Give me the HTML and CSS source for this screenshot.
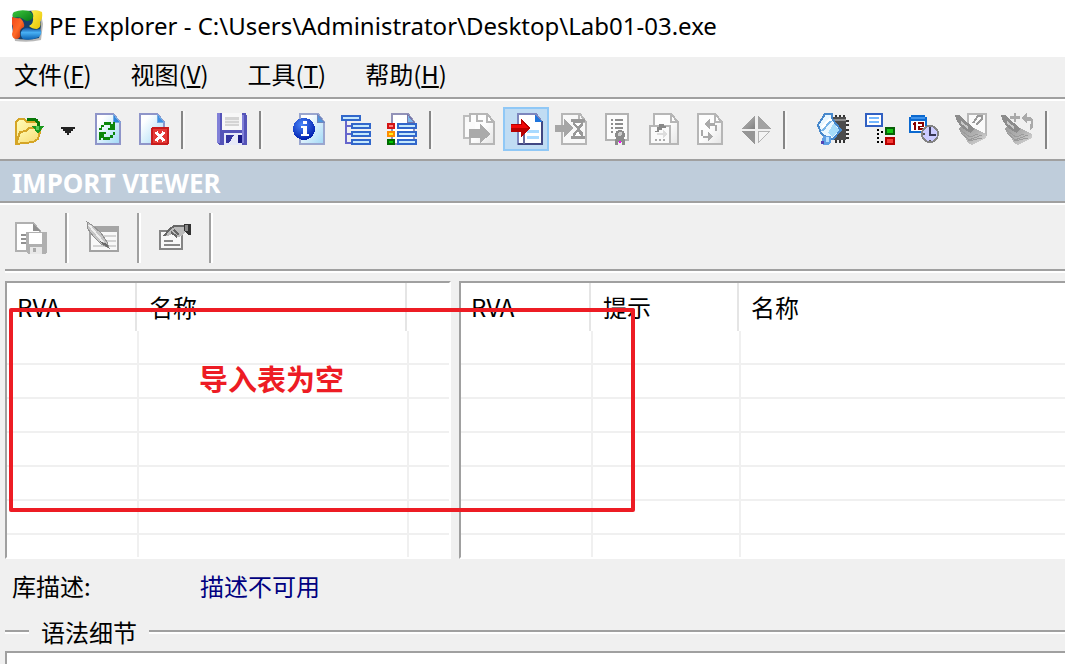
FILE: index.html
```html
<!DOCTYPE html>
<html lang="zh-CN">
<head>
<meta charset="utf-8">
<meta name="viewport" content="width=device-width, initial-scale=1">
<title>PE Explorer</title>
<link rel="stylesheet" href="styles.css">
</head>
<body>
<header class="titlebar">
  <svg class="app-icon" viewBox="0 0 32 32" aria-hidden="true">
    <defs>
      <linearGradient id="paper" x1="0" y1="0" x2="1" y2="1"><stop offset=".2" stop-color="#fff"/><stop offset="1" stop-color="#9fd8f6"/></linearGradient>
      <linearGradient id="greyPaper" x1="0" y1="0" x2="1" y2="1"><stop offset=".5" stop-color="#fdfdfd"/><stop offset="1" stop-color="#e4e4e4"/></linearGradient>
      <linearGradient id="folder" x1="0" y1="0" x2="1" y2="1"><stop offset="0" stop-color="#fffdb8"/><stop offset="1" stop-color="#f7d76c"/></linearGradient>
      <radialGradient id="orb" cx=".4" cy=".3" r=".7"><stop offset="0" stop-color="#4a86f8"/><stop offset="1" stop-color="#0020b0"/></radialGradient>
      <linearGradient id="metal" x1="0" y1="0" x2="1" y2="1"><stop offset="0" stop-color="#c4c4c4"/><stop offset="1" stop-color="#808080"/></linearGradient>
      <linearGradient id="broom" x1="0" y1="0" x2="1" y2="1"><stop offset="0" stop-color="#9a9a9a"/><stop offset=".5" stop-color="#b0b0b0"/><stop offset="1" stop-color="#dcdcdc"/></linearGradient>
      <linearGradient id="swRed" x1="0" y1="0" x2="1" y2="1"><stop offset="0" stop-color="#f0481c"/><stop offset=".5" stop-color="#ff6a28"/><stop offset="1" stop-color="#b82000"/></linearGradient>
      <linearGradient id="swBlue" x1="0" y1="0" x2="0" y2="1"><stop offset="0" stop-color="#1450a0"/><stop offset=".4" stop-color="#48b0f4"/><stop offset="1" stop-color="#0a60b0"/></linearGradient>
      <linearGradient id="swGreen" x1="0" y1="0" x2="1" y2="1"><stop offset="0" stop-color="#3cc83c"/><stop offset="1" stop-color="#087818"/></linearGradient>
      <linearGradient id="swYellow" x1="0" y1="0" x2="1" y2="1"><stop offset="0" stop-color="#fff450"/><stop offset="1" stop-color="#e8c000"/></linearGradient>
    </defs>
    <path d="M3 5Q16 1 30 4L32 14 30 30Q18 33 4 31L2 18z" fill="#888" opacity=".6"/>
    <path d="M2 3Q10 0 28 1L30 16 28 28Q15 31 3 28L1 16z" fill="#16406c"/>
    <path d="M3 2Q10 -1 18 1Q24 5 21 9Q16 13 12 9Q8 6 3 8Q0 5 3 2Z" fill="url(#swGreen)"/>
    <path d="M20 1Q26 -1 31 2Q32 8 29 12Q31 17 26 19Q21 19 18 16Q23 13 22 8Q23 4 20 1Z" fill="url(#swYellow)"/>
    <path d="M1 7Q7 9 9 8Q14 12 13 17Q8 19 9 24Q10 28 6 29Q1 29 1 24Q3 18 1 14Z" fill="url(#swRed)"/>
    <path d="M10 22Q13 17 18 18Q22 21 29 19Q32 23 28 27Q20 31 12 29Q9 26 10 22Z" fill="url(#swBlue)"/>
  </svg>
  <h1 class="title">PE Explorer - C:\Users\Administrator\Desktop\Lab01-03.exe</h1>
</header>

<nav class="menubar" aria-label="菜单">
  <button type="button" class="menu">文件(<u>F</u>)</button>
  <button type="button" class="menu">视图(<u>V</u>)</button>
  <button type="button" class="menu">工具(<u>T</u>)</button>
  <button type="button" class="menu">帮助(<u>H</u>)</button>
</nav>

<div class="toolbar" role="toolbar" aria-label="工具栏">
  <button type="button" class="tool" aria-label="打开">
    <svg viewBox="0 0 32 32">
      <path d="M3 31V9l3-3h5l3 3h12v7l-2 8-6 4z" fill="url(#folder)" stroke="#d5a526" stroke-width="2"/>
      <path d="M3 31l4-12 6-1 3-3h12l-3 11-5 3z" fill="url(#folder)" stroke="#d5a526" stroke-width="2"/>
      <path d="M14 6h7q5 2 5 8" fill="none" stroke="#087808" stroke-width="3"/>
      <path d="M19 13h12l-6 8z" fill="#18981c"/><path d="M23 13h3v4h-3z" fill="#58c858"/>
    </svg>
  </button>
  <button type="button" class="dropdown" aria-label="最近文件"><svg viewBox="0 0 14 8"><path d="M0 0h14v2h-2v2h-2v2H8v2H6V6H4V4H2V2H0z" fill="#222"/></svg></button>
  <button type="button" class="tool" aria-label="刷新">
    <svg viewBox="0 0 32 32">
      <path d="M4 1h17l7 8v22H4z" fill="url(#paper)" stroke="#8f95c9" stroke-width="2"/><path d="M21 1v8h7z" fill="#2e86dc" stroke="#76a8e0"/>
      <path d="M7 15h2v-3h3V9h7v2h2V9h2v8h-7v-2h2v-3h-6v2h-2v3H7zM23 19h-2v3h-3v2h-6v-3h2v-2H7v8h2v-2h2v2h7v-2h3v-3h2z" fill="#0b860b"/>
    </svg>
  </button>
  <button type="button" class="tool" aria-label="关闭文件">
    <svg viewBox="0 0 32 32">
      <path d="M2 1h17l7 8v22H2z" fill="url(#paper)" stroke="#8f95c9" stroke-width="2"/><path d="M19 1v8h7z" fill="#3c91e4" stroke="#76a8e0"/>
      <rect x="13" y="14" width="18" height="18" rx="2" fill="#c81c1c"/><rect x="15" y="16" width="14" height="14" fill="#e43a36"/>
      <path d="M18 19l8 9M26 19l-8 9" stroke="#fff" stroke-width="3"/>
    </svg>
  </button>
  <span class="sep"></span>
  <button type="button" class="tool" aria-label="保存">
    <svg viewBox="0 0 32 32">
      <path d="M1 0h29v2h1v30H3l-2-2z" fill="#5554b8"/><path d="M1 0h3v30H1zM26 2h2v28h-2z" fill="#8180d8"/>
      <path d="M6 0h20v17H6z" fill="#f7f7f7"/><path d="M9 4h14v9H9z" fill="#d4d4d4"/><path d="M9 7h14v1H9zM9 10h14v1H9z" fill="#eee"/>
      <path d="M8 20h18v12H8z" fill="#e7e9f8"/><path d="M10 22h8l-5 8h-3z" fill="#3434a0"/><path d="M22 22h4v8h-4z" fill="#191983"/>
    </svg>
  </button>
  <span class="sep"></span>
  <button type="button" class="tool" aria-label="文件头信息">
    <svg viewBox="0 0 32 32">
      <path d="M6 1h18l6 8v22H6z" fill="url(#paper)" stroke="#9aa6cf" stroke-width="2"/><path d="M23 1v8h7z" fill="#4e94dc" stroke="#7286be"/>
      <circle cx="10" cy="16" r="11" fill="url(#orb)"/><path d="M9 8h4v3H9zM7 13h6v8h2v2H7v-2h2v-6H7z" fill="#fff"/>
    </svg>
  </button>
  <button type="button" class="tool" aria-label="数据目录">
    <svg viewBox="0 0 32 32">
      <path d="M6 8v22h6M6 13h6M6 21h6" fill="none" stroke="#6666cc" stroke-width="2"/>
      <path d="M2 3h18v4H2zM12 11h18v4H12zM12 19h18v4H12zM12 27h18v4H12z" fill="#c5e8fc" stroke="#3167cb" stroke-width="2"/>
    </svg>
  </button>
  <button type="button" class="tool" aria-label="节头">
    <svg viewBox="0 0 32 32">
      <path d="M6 31V1h16l6 8v22z" fill="#fff" stroke="#9292b8" stroke-width="2"/><path d="M21 1v8h7z" fill="#7cb8ec" stroke="#7777aa"/>
      <path d="M12 11h18v4H12zM12 19h18v4H12zM12 27h18v4H12z" fill="#c5e8fc" stroke="#3167cb" stroke-width="2"/>
      <path d="M2 11h6v4H2z" fill="#ff8080" stroke="#d41414" stroke-width="2"/><path d="M2 19h6v4H2z" fill="#ffee20" stroke="#ff8c00" stroke-width="2"/><path d="M2 27h6v4H2z" fill="#00c800" stroke="#006a00" stroke-width="2"/>
    </svg>
  </button>
  <span class="sep"></span>
  <button type="button" class="tool" aria-label="导出表">
    <svg viewBox="0 0 32 32">
      <path d="M0 3h15l5 6v16H0z" fill="#f8f8f8" stroke="#bdbdbd" stroke-width="2"/><path d="M6 1h17l7 8v22H6z" fill="url(#greyPaper)" stroke="#b6b6b6" stroke-width="2"/><path d="M23 1v8h7M13 2v6h6" fill="none" stroke="#b6b6b6" stroke-width="2"/><path d="M1 9h10v15H1z" fill="#fafafa"/>
      <path d="M5 16h11v-5l11 10-11 9v-5H5z" fill="#aaa"/>
    </svg>
  </button>
  <button type="button" class="tool selected" aria-label="导入表" aria-pressed="true">
    <svg viewBox="0 0 32 32">
      <path d="M8 1h18l6 8v22H8z" fill="#fff" stroke="#7d86bd" stroke-width="2"/><path d="M8 31h24V8" fill="none" stroke="#414782" stroke-width="2"/><path d="M25 1v8h7z" fill="#1f75dc"/><path d="M14 19v12" stroke="#65699a" stroke-width="2"/><path d="M17 17h12v3H17zM17 23h12v3H17z" fill="#a9daff"/>
      <path d="M1 11h10V6l10 9-10 9v-5H1z" fill="#b80000"/><path d="M1 12h11V9l7 6H1z" fill="#f00909"/>
    </svg>
  </button>
  <button type="button" class="tool" aria-label="延迟导入">
    <svg viewBox="0 0 32 32">
      <path d="M6 1h18l6 8v22H6z" fill="#f8f8f8" stroke="#b6b6b6" stroke-width="2"/><path d="M23 1v8h7" fill="none" stroke="#b6b6b6" stroke-width="2"/>
      <path d="M-1 12H8V6l10 9-10 9v-5h-9z" fill="#a6a6a6"/>
      <path d="M15 6h14v3h-2v3l-4 4 4 4v3h2v3H15v-3h2v-3l4-4-4-4V9h-2z" fill="#999"/><path d="M19 10h6l-3 4zM22 18l3 5h-6z" fill="#fff"/>
    </svg>
  </button>
  <button type="button" class="tool" aria-label="证书">
    <svg viewBox="0 0 32 32">
      <path d="M4 1h22v26H4z" fill="#fcfcfc" stroke="#b2b2b2" stroke-width="2"/><path d="M9 6h2v2H9zM13 6h8v2h-8zM9 10h2v2H9zM13 10h8v2h-8zM9 14h2v2H9zM13 14h8v2h-8zM9 18h2v2H9z" fill="#8d8d8d"/>
      <path d="M13 26h10v6h-3v-3h-4v3h-3z" fill="#8b8b8b"/><circle cx="18" cy="22" r="5" fill="#8b8b8b"/><circle cx="18" cy="21" r="2" fill="#ccc"/><path d="M17 28h2v2h-2z" fill="#f0f"/>
    </svg>
  </button>
  <button type="button" class="tool" aria-label="重定位">
    <svg viewBox="0 0 32 32">
      <path d="M6 1h17l7 8v22H6z" fill="url(#greyPaper)" stroke="#b6b6b6" stroke-width="2"/><path d="M23 1v8h7" fill="none" stroke="#b6b6b6" stroke-width="2"/><path d="M2 13h20v18H2z" fill="#fafafa" stroke="#b6b6b6" stroke-width="2"/>
      <path d="M7 18h2v-4h2v-3h5v2h2v2h-4v2h-3v2H7z" fill="#888"/><path d="M9 20h6v-3l4 4-4 4v-3H9z" fill="#ddd"/><path d="M7 26h2v2H7zM11 26h2v2h-2zM15 26h2v2h-2z" fill="#aaa"/>
    </svg>
  </button>
  <button type="button" class="tool" aria-label="重新计算">
    <svg viewBox="0 0 32 32">
      <path d="M4 1h17l7 8v22H4z" fill="url(#greyPaper)" stroke="#b6b6b6" stroke-width="2"/><path d="M21 1v8h7" fill="none" stroke="#b6b6b6" stroke-width="2"/>
      <path d="M10 11l6-5v4h5v2h2v6h-2v-5h-5v3zM7 17h2v6h5v-4l5 5-5 4v-3H9v-2H7z" fill="#aaa"/>
    </svg>
  </button>
  <button type="button" class="tool" aria-label="菱形视图">
    <svg viewBox="0 0 32 32"><path d="M15 2v14H1z" fill="url(#metal)"/><path d="M18 2v14h13z" fill="#a2a2a2"/><path d="M1 18h14v14z" fill="#969696"/><path d="M18 18h12L18 30z" fill="#f4f4f4" stroke="#b4b4b4"/></svg>
  </button>
  <span class="sep"></span>
  <button type="button" class="tool" aria-label="反汇编">
    <svg viewBox="0 0 32 32">
      <path d="M18 2v28M22 2v28M26 2v28M14 8h17M14 12h17M14 17h17M14 21h17M14 25h17" stroke="#333" stroke-width="2"/><path d="M14 4h14v23H14z" fill="#4c4c4c"/><path d="M16 6h12v2H16z" fill="#8c8c8c"/>
      <path d="M7 1h7v5l9 11-8 9-6-1-6-5-3-8z" fill="#e9f7ff" stroke="#4788cc" stroke-width="2"/><path d="M3 13L12 4l2 3-8 10z" fill="#fff"/><path d="M10 20l6-10 5 7-6 7z" fill="#a6dcfa"/><path d="M4 18l9-10" stroke="#77b4e8" stroke-width="2"/>
      <path d="M5 23h8v6l-2 3H5l-2-2z" fill="#5e9fe4"/><path d="M3 28h3v3H3z" fill="#5144b6"/><path d="M8 24h3v5H8z" fill="#b9e0ff"/>
    </svg>
  </button>
  <button type="button" class="tool" aria-label="依赖扫描">
    <svg viewBox="0 0 32 32">
      <path d="M2 1h16v12H2z" fill="#fff" stroke="#3160c2" stroke-width="2"/><path d="M5 4h10v2H5zM5 8h10v2H5z" fill="#75b7ff"/>
      <path d="M13 16h2v2h-2zM13 20h2v2h-2zM13 24h2v2h-2zM13 28h2v2h-2zM17 18h2v2h-2zM17 28h2v2h-2z" fill="#000"/>
      <path d="M22 15h8v6h-8z" fill="#12c612" stroke="#086008" stroke-width="2"/><path d="M22 25h8v6h-8z" fill="#f63a36" stroke="#b80000" stroke-width="2"/>
    </svg>
  </button>
  <button type="button" class="tool" aria-label="时间戳">
    <svg viewBox="0 0 32 32">
      <path d="M1 2h14v2h2v16H-1V4h2z" fill="#0b69d0"/><path d="M1 8h14v10H1z" fill="#fff"/><path d="M1 4h14v2H1z" fill="#3f92ea"/><path d="M4 9h2v8H4zM3 10h2v2H3zM8 9h6v5h-4v1h4v2H8v-4h4v-2H8z" fill="#880000"/>
      <circle cx="20" cy="21" r="8" fill="#cbcbff" stroke="#838383" stroke-width="2"/><path d="M20 14v8h6" fill="none" stroke="#363654" stroke-width="2"/><path d="M19 27h2v1h-2zM13 20h2v2h-2z" fill="#555"/>
    </svg>
  </button>
  <button type="button" class="tool" aria-label="清理文件">
    <svg viewBox="0 0 32 32">
      <path d="M12 1h18v21H12z" fill="#fafafa" stroke="#b8b8b8" stroke-width="2"/><path d="M17 10l5-7h4v3l-6 6" fill="none" stroke="#999" stroke-width="2"/>
      <path d="M3 15l8-3 9 4 10 5v4l-8 4-6 3-5-3-1-5-6-5z" fill="url(#broom)"/><path d="M-1 2h4l9 8 6 6-3 4-9-5-5-7z" fill="#8c8c8c"/><path d="M3 16l11 8 8-3M5 20l8 7 13-5M12 28l14-3" fill="none" stroke="#9b9b9b"/><path d="M5 9l7 6" stroke="#c8c8c8" stroke-width="2"/>
    </svg>
  </button>
  <button type="button" class="tool" aria-label="清理重定位">
    <svg viewBox="0 0 32 32">
      <path d="M12 0h2v3h4v3h-4v3h-2V6H8V3h4zM19 5l6-5v4h3l3 2v8l-3 3v-3l1-6h-4v3z" fill="#aaa"/>
      <path d="M3 15l8-3 9 4 10 5v4l-8 4-6 3-5-3-1-5-6-5z" fill="url(#broom)"/><path d="M-1 2h4l9 8 6 6-3 4-9-5-5-7z" fill="#8c8c8c"/><path d="M3 16l11 8 8-3M5 20l8 7 13-5M12 28l14-3" fill="none" stroke="#9b9b9b"/><path d="M5 9l7 6" stroke="#c8c8c8" stroke-width="2"/>
    </svg>
  </button>
  <span class="sep"></span>
</div>

<main class="viewer">
  <h2 class="view-title">IMPORT VIEWER</h2>
  <div class="subbar" role="toolbar" aria-label="导入查看器工具">
    <button type="button" class="tool" aria-label="另存为">
      <svg viewBox="0 0 32 32">
        <path d="M1 1h17l7 8v20H1z" fill="#fff" stroke="#b0b0b0" stroke-width="2"/><path d="M18 1v8h7z" fill="#909090"/><path d="M6 12h5v2H6zM6 16h5v2H6zM6 20h5v2H6z" fill="#929292"/>
        <path d="M11 10h21v20l-2 2H13l-2-2z" fill="#b0b0b0"/><path d="M14 11h13v11H14z" fill="#fff"/><path d="M15 25h12v7H15z" fill="#e8e8e8"/><path d="M18 26h3v4h-3z" fill="#aaa"/>
      </svg>
    </button>
    <span class="sep"></span>
    <button type="button" class="tool" aria-label="编辑">
      <svg viewBox="0 0 32 32">
        <path d="M3 5h28v24H3z" fill="#f8f8f8" stroke="#a3a3a3" stroke-width="2"/><path d="M2 4h30v6H2z" fill="#a5a5a5"/><path d="M12 14h17M14 19h15M6 24h23" stroke="#d4d4d4" stroke-width="2"/>
        <path d="M0 0l5 3 9 8 6 9 2 6-8-4-8-8-5-7z" fill="#c5c5c5" stroke="#909090"/><path d="M2 3l14 17" stroke="#eee" stroke-width="2"/><path d="M13 19l7 3 2 4-7-4z" fill="#696969"/>
      </svg>
    </button>
    <span class="sep"></span>
    <button type="button" class="tool" aria-label="属性">
      <svg viewBox="0 0 32 32">
        <path d="M1 9h22v18H1z" fill="#f8f8f8" stroke="#858585" stroke-width="2"/><path d="M5 19h9M5 23h16" stroke="#888" stroke-width="2"/>
        <path d="M5 14l5-6 5-5h12v7l-5 4-5 2-4-4-4 2z" fill="#bbb"/><path d="M5 14l5-6 5-4h11M12 10l6 5M15 8l5 5" fill="none" stroke="#666" stroke-width="2"/><path d="M25 2h7v11h-3l-4-4z" fill="#333"/><path d="M26 3h3v6h-3z" fill="#888"/>
      </svg>
    </button>
    <span class="sep"></span>
  </div>

  <div class="panels">
    <div class="panel">
      <table class="grid">
        <colgroup><col class="col-rva"><col class="col-library"><col></colgroup>
        <thead><tr><th>RVA</th><th>名称</th><th></th></tr></thead>
        <tbody>
          <tr><td></td><td></td><td></td></tr><tr><td></td><td></td><td></td></tr><tr><td></td><td></td><td></td></tr><tr><td></td><td></td><td></td></tr><tr><td></td><td></td><td></td></tr><tr><td></td><td></td><td></td></tr><tr><td></td><td></td><td></td></tr>
        </tbody>
      </table>
    </div>
    <div class="panel">
      <table class="grid">
        <colgroup><col class="col-rva"><col class="col-hint"><col></colgroup>
        <thead><tr><th>RVA</th><th>提示</th><th>名称</th></tr></thead>
        <tbody>
          <tr><td></td><td></td><td></td></tr><tr><td></td><td></td><td></td></tr><tr><td></td><td></td><td></td></tr><tr><td></td><td></td><td></td></tr><tr><td></td><td></td><td></td></tr><tr><td></td><td></td><td></td></tr><tr><td></td><td></td><td></td></tr>
        </tbody>
      </table>
    </div>
    <div class="callout">导入表为空</div>
  </div>

  <div class="description"><span>库描述:</span><span class="value">描述不可用</span></div>
  <div class="syntax-head"><label for="syntax">语法细节</label></div>
  <textarea id="syntax" class="syntax" readonly></textarea>
</main>
</body>
</html>
```
FILE: styles.css
```css
*, *::before, *::after { box-sizing: border-box; }

body {
  margin: 0;
  height: 100vh;
  display: flex;
  flex-direction: column;
  overflow: hidden;
  background: #f0f0f0;
  color: #000;
  font-family: "Noto Sans CJK SC", sans-serif;
  font-size: 24px;
  line-height: 32px;
}

button {
  border: 0;
  padding: 0;
  background: none;
  color: inherit;
  font: inherit;
}

svg { display: block; overflow: visible; }

.titlebar {
  flex: none;
  display: flex;
  align-items: center;
  gap: 6px;
  height: 57px;
  padding: 0 11px 6px;
  background: #fff;
}
.app-icon { width: 32px; height: 32px; }
.title {
  margin: 0;
  font: 400 24px/32px "Noto Sans", sans-serif;
  white-space: nowrap;
}

.menubar {
  flex: none;
  display: flex;
  gap: 39px;
  height: 42px;
  padding: 0 14px 6px;
  border-bottom: 2px solid #a0a0a0;
}
.menu { white-space: nowrap; }
.menu u { text-decoration-thickness: 2px; text-underline-offset: 2px; }

.toolbar {
  flex: none;
  display: flex;
  align-items: center;
  height: 62px;
  padding: 0 0 2px 6px;
  border-top: 2px solid #fff;
  border-bottom: 2px solid #a0a0a0;
}
.tool {
  flex: none;
  width: 46px;
  height: 44px;
  padding: 6px 7px;
}
.tool svg { width: 32px; height: 32px; shape-rendering: crispEdges; }
.tool.selected {
  padding: 4px 5px;
  border: 2px solid #90c8f6;
  background: #c0dcf3;
}
.dropdown { flex: none; width: 33px; padding: 4px 9px 0; }
.dropdown svg { width: 14px; height: 8px; shape-rendering: crispEdges; }
.sep {
  flex: none;
  width: 4px;
  height: 38px;
  margin: 2px 24px 0 4px;
  border-left: 2px solid #868686;
  border-right: 2px solid #f8f8f8;
}

.viewer { flex: 1; min-height: 0; display: flex; flex-direction: column; }
.view-title {
  flex: none;
  margin: 0;
  height: 42px;
  padding: 4px 12px;
  border-bottom: 2px solid #a0a0a0;
  background: #bfcddb;
  color: #fff;
  font: 700 26px/36px "Noto Sans", sans-serif;
}
.subbar {
  flex: none;
  display: flex;
  align-items: center;
  height: 66px;
  padding: 2px 0 0 8px;
  border-top: 2px solid #fff;
}
.subbar .sep {
  height: 50px;
  margin: 0 11px;
  border-left-color: #a0a0a0;
  border-right-color: #fff;
}

.panels {
  position: relative;
  flex: none;
  display: grid;
  grid-template-columns: 446fr 606fr;
  gap: 8px;
  margin-left: 5px;
}
.panels::before {
  content: "";
  grid-column: 1 / -1;
  height: 4px;
  border-top: 2px solid #a0a0a0;
  border-bottom: 2px solid #fff;
}
.panel {
  overflow: hidden;
  border: 2px solid #fff;
  border-top-color: #a0a0a0;
  border-left-color: #a0a0a0;
  background: #fff;
}
.panel:nth-child(2) { border-right: 0; }
.grid { width: 100%; table-layout: fixed; border-collapse: separate; border-spacing: 0; }
.col-rva { width: 132px; }
.col-library { width: 270px; }
.col-hint { width: 148px; }
.grid th {
  height: 48px;
  padding: 0 10px;
  font-weight: 400;
  text-align: left;
}
.grid th:not(:last-child) {
  background: linear-gradient(#e5e5e5, #e5e5e5) right 2px top / 2px 100% no-repeat;
}
.grid td {
  height: 34px;
  padding: 0;
  border-bottom: 2px solid #f0f0f0;
}
.grid td:not(:last-child) { border-right: 2px solid #f0f0f0; }
.grid tr:last-child td { height: 22px; border-bottom: 0; }

/* Marker drawn over both tables */
.callout {
  position: absolute;
  left: 4px;
  top: 39px;
  width: 626px;
  height: 204px;
  padding: 46px 186px;
  border: 4px solid #ed1c24;
  border-radius: 2px;
  color: #ed1c24;
  font-size: 29px;
  font-weight: 700;
  line-height: 40px;
  white-space: nowrap;
}

.description {
  flex: none;
  display: grid;
  grid-template-columns: 188px 1fr;
  align-items: center;
  height: 54px;
  padding-left: 12px;
}
.value { color: #000080; }
.syntax-head {
  flex: none;
  display: flex;
  align-items: center;
  gap: 12px;
  height: 38px;
  margin-left: 5px;
}
.syntax-head::before,
.syntax-head::after {
  content: "";
  width: 24px;
  height: 4px;
  border-top: 2px solid #a0a0a0;
  border-bottom: 2px solid #fff;
}
.syntax-head::after { flex: 1; }
.syntax {
  flex: 1;
  min-height: 13px;
  margin: 0 0 0 5px;
  padding: 0;
  border: solid #a0a0a0;
  border-width: 2px 0 0 2px;
  background: #fff;
  resize: none;
  outline: 0;
}
```
